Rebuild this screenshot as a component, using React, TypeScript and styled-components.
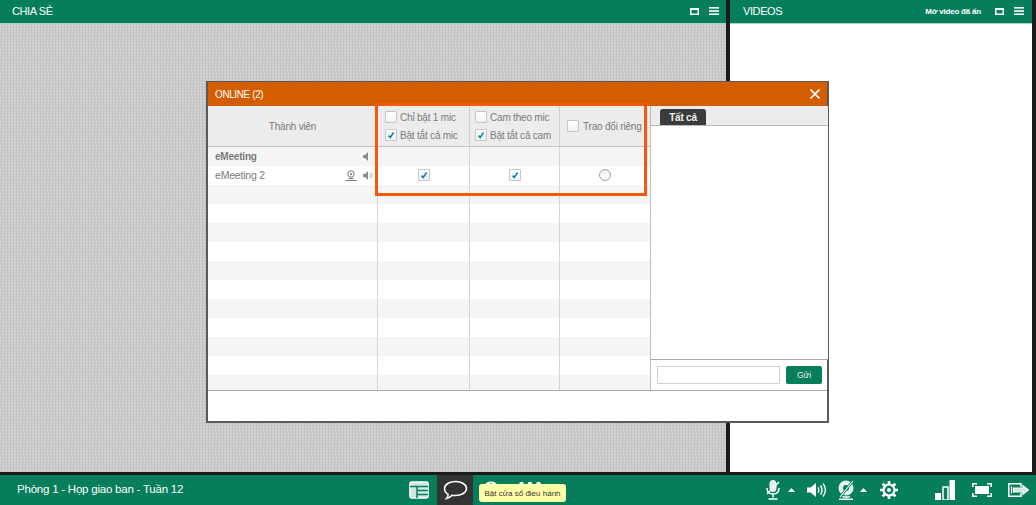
import styled, { createGlobalStyle } from "styled-components";

const GlobalStyle = createGlobalStyle`
  html, body {
    margin: 0;
    padding: 0;
    background: #1a1a1a;
  }
  * {
    box-sizing: border-box;
  }
`;

const GREEN = "#067d5b";
const TEXT = "#7a7a7a";
const COLUMNS = "169px 92px 90px 91px";

const Page = styled.div`
  position: relative;
  width: 1036px;
  height: 505px;
  display: flex;
  flex-direction: column;
  overflow: hidden;
  font-family: "Liberation Sans", Arial, sans-serif;
  background: #1a1a1a;
`;

const Main = styled.div`
  height: 472px;
  display: flex;
  gap: 4px;
  padding-right: 4px;
`;

const Panel = styled.section<{ $width: number }>`
  width: ${(props) => props.$width}px;
  display: flex;
  flex-direction: column;
`;

const PanelHeader = styled.header<{ $left: number; $right: number }>`
  height: 24px;
  flex: none;
  display: flex;
  align-items: center;
  padding: 0 ${(props) => props.$right}px 1px ${(props) => props.$left}px;
  background: ${GREEN};
  border-bottom: 1px solid #9fd8c4;
  color: #fff;
`;

const PanelTitle = styled.h2`
  margin: 0;
  flex: 1;
  font-size: 11px;
  font-weight: 400;
  letter-spacing: -0.4px;
`;

const HiddenLink = styled.span`
  font-size: 8px;
  font-weight: 700;
  margin-right: 14px;
  letter-spacing: -0.2px;
`;

const HeaderIcons = styled.div`
  display: flex;
  align-items: center;
  gap: 10px;
  svg {
    display: block;
  }
`;

const ShareBody = styled.div`
  flex: 1;
  background-color: #cbcbcb;
  background-image: repeating-conic-gradient(#c2c2c2 0 25%, #d4d4d4 0 50%);
  background-size: 3px 3px;
`;

const VideoBody = styled.div`
  flex: 1;
  background: #fff;
`;

const BottomBar = styled.footer`
  margin-top: 3px;
  height: 30px;
  display: flex;
  align-items: stretch;
  background: ${GREEN};
  color: #fff;
`;

const RoomName = styled.div`
  width: 400px;
  padding: 0 0 3px 17px;
  display: flex;
  align-items: center;
  font-size: 11.5px;
  letter-spacing: -0.22px;
`;

const BarCell = styled.div<{ $width: number; $active?: boolean; $gap?: number }>`
  width: ${(props) => props.$width}px;
  display: flex;
  align-items: center;
  justify-content: center;
  gap: ${(props) => props.$gap ?? 0}px;
  background: ${(props) => (props.$active ? "#333" : "transparent")};
`;

const BarSpacer = styled.div<{ $width?: number }>`
  flex: ${(props) => (props.$width ? `0 0 ${props.$width}px` : "1")};
`;

const Tooltip = styled.div`
  position: absolute;
  left: 479px;
  top: 484px;
  width: 87px;
  height: 18px;
  display: flex;
  align-items: center;
  justify-content: center;
  background: #ffffa8;
  border-radius: 3px;
  color: #333;
  font-size: 8px;
  white-space: nowrap;
`;

const Modal = styled.div`
  position: absolute;
  left: 206px;
  top: 81px;
  width: 623px;
  height: 342px;
  display: flex;
  flex-direction: column;
  background: #fff;
  border: 1px solid #5a5a5a;
  border-right-width: 2px;
  border-bottom-width: 2px;
  border-left-width: 2px;
`;

const ModalTitle = styled.div`
  height: 24px;
  flex: none;
  display: flex;
  align-items: center;
  justify-content: space-between;
  padding: 0 7px 0 7px;
  background: #d45d00;
  color: #fff;
  font-size: 10px;
  letter-spacing: -0.4px;
`;

const ModalBody = styled.div`
  height: 285px;
  flex: none;
  display: flex;
  border-bottom: 1px solid #a8a8a8;
`;

const Members = styled.div`
  width: 443px;
  flex: none;
  overflow: hidden;
  border-right: 1px solid #bdbdbd;
`;

const TableHead = styled.div`
  height: 41px;
  display: grid;
  grid-template-columns: ${COLUMNS};
  background: #ececec;
  border-bottom: 1px solid #c4c4c4;
`;

const HeadCell = styled.div<{ $center?: boolean; $pad?: number }>`
  display: flex;
  flex-direction: column;
  justify-content: center;
  align-items: ${(props) => (props.$center ? "center" : "flex-start")};
  gap: 5px;
  padding-left: ${(props) => props.$pad ?? 0}px;
  color: ${TEXT};
  font-size: 10px;
  letter-spacing: -0.2px;
  border-left: 1px solid #cfcfcf;
  &:first-child {
    border-left: none;
  }
`;

const CheckLabel = styled.label<{ $gap?: number }>`
  height: 13px;
  display: flex;
  align-items: center;
  gap: ${(props) => props.$gap ?? 3}px;
  white-space: nowrap;
`;

const Row = styled.div<{ $shaded: boolean }>`
  height: 19px;
  display: grid;
  grid-template-columns: ${COLUMNS};
  background: ${(props) => (props.$shaded ? "#f5f5f5" : "#fff")};
`;

const NameCell = styled.div<{ $bold?: boolean }>`
  display: flex;
  align-items: center;
  gap: 6px;
  padding: 0 4px 1px 7px;
  color: ${TEXT};
  font-size: ${(props) => (props.$bold ? 10 : 10.5)}px;
  font-weight: ${(props) => (props.$bold ? 700 : 400)};
  letter-spacing: -0.2px;
`;

const Name = styled.span`
  flex: 1;
`;

const ToggleCell = styled.div`
  display: flex;
  align-items: center;
  justify-content: center;
  padding-bottom: 1px;
  border-left: 1px solid #d6d6d6;
`;

const Box = styled.span`
  width: 12px;
  height: 12px;
  flex: none;
  display: flex;
  align-items: center;
  justify-content: center;
  background: linear-gradient(#fff, #f2f2f2);
  border: 1px solid #c6c6c6;
  border-radius: 1px;
`;

const Radio = styled.span`
  width: 12px;
  height: 12px;
  border-radius: 50%;
  border: 1px solid #a0a0a0;
  background: linear-gradient(#f0f0f0, #fff);
`;

const Chat = styled.div`
  flex: 1;
  display: flex;
  flex-direction: column;
`;

const TabBar = styled.div`
  height: 20px;
  flex: none;
  display: flex;
  align-items: flex-end;
  padding-left: 9px;
  background: #ececec;
  border-bottom: 1px solid #b8b8b8;
`;

const Tab = styled.div`
  width: 46px;
  height: 16px;
  display: flex;
  align-items: center;
  justify-content: center;
  background: #3b3b3b;
  border-radius: 3px 3px 0 0;
  color: #f0f0f0;
  font-size: 10px;
  font-weight: 700;
  letter-spacing: -0.2px;
`;

const Messages = styled.div`
  flex: 1;
  background: #fff;
`;

const Composer = styled.div`
  height: 31px;
  flex: none;
  display: flex;
  align-items: center;
  gap: 6px;
  padding: 0 6px;
  border-top: 1px solid #a8a8a8;
`;

const ChatInput = styled.input`
  width: 123px;
  height: 18px;
  padding: 0 4px;
  background: #fff;
  border: 1px solid #cfcfcf;
  outline: none;
`;

const SendButton = styled.button`
  width: 36px;
  height: 18px;
  padding: 0;
  background: ${GREEN};
  border: none;
  border-radius: 2px;
  color: #f2f2f2;
  font-family: inherit;
  font-size: 8.5px;
  font-weight: 400;
`;

const ModalFooter = styled.div`
  flex: 1;
  background: #fff;
`;

const Highlight = styled.div`
  position: absolute;
  left: 375px;
  top: 103px;
  width: 272px;
  height: 93px;
  border: 3px solid #f4590b;
  pointer-events: none;
`;

const WindowIcon = () => (
  <svg width="9" height="7" viewBox="0 0 9 7">
    <rect x="0.75" y="0.75" width="7.5" height="5.5" fill="#067d5b" stroke="#fff" strokeWidth="1.5" />
    <rect x="1" y="1" width="7" height="1" fill="#fff" />
  </svg>
);

const MenuIcon = () => (
  <svg width="10" height="8" viewBox="0 0 10 8" fill="#fff">
    <rect y="0" width="10" height="1.6" />
    <rect y="3.2" width="10" height="1.6" />
    <rect y="6.4" width="10" height="1.6" />
  </svg>
);

const CloseIcon = () => (
  <svg width="10" height="10" viewBox="0 0 10 10" stroke="#fff" strokeWidth="1.6">
    <path d="M0.5 0.5 9.5 9.5M9.5 0.5 0.5 9.5" />
  </svg>
);

const Tick = () => (
  <svg width="8" height="8" viewBox="0 0 8 8" fill="none" stroke="#0b86a3" strokeWidth="1.6">
    <path d="M1.5 4.6 3.2 6.4 6.6 1.5" />
  </svg>
);

const SpeakerSmall = ({ waves }: { waves?: boolean }) => (
  <svg width="10" height="9" viewBox="0 0 10 9" fill="#8c8c8c">
    <path d="M0 3h2l3-3v9L2 6H0z" />
    {waves && <path d="M6.5 2.5c1 1.2 1 2.800 0 4M8 1.500c1.600 1.800 1.600 4.200 0 6" fill="none" stroke="#b5b5b5" />}
  </svg>
);

const CamSmall = () => (
  <svg width="12" height="11" viewBox="0 0 12 11" fill="none" stroke="#777">
    <circle cx="6" cy="4" r="3.200" />
    <circle cx="6" cy="4" r="1" fill="#777" stroke="none" />
    <path d="M0.500 10.500h11M3.500 8.500h5" />
  </svg>
);

const LayoutIcon = () => (
  <svg width="20" height="18" viewBox="0 0 20 18">
    <rect x="1" y="1" width="18" height="16" rx="2" fill="#cfe8df" stroke="#fff" strokeWidth="1.600" />
    <path d="M1 5.500h18M8 5.500V17M8 9.500h11M8 13.500h11" stroke={GREEN} strokeWidth="1.500" />
  </svg>
);

const BubbleIcon = () => (
  <svg width="25" height="20" viewBox="0 0 25 20" fill="none" stroke="#fff" strokeWidth="1.500">
    <path d="M12.500 1.500c6 0 11 3 11 7s-5 7-11 7c-1.200 0-2.300-.1-3.400-.3-1.200 1.400-3 2.600-5.600 3.300 1-1.200 1.600-2.600 1.700-4.200C2.800 13 1.500 10.900 1.500 8.500c0-4 5-7 11-7z" />
  </svg>
);

const ConsoleIcon = () => (
  <svg width="20" height="20" viewBox="0 0 20 20">
    <circle cx="10" cy="10" r="8.500" fill="#f2f7f4" />
    <path d="M6 7l4-3 3 3" fill="none" stroke="#067d5b" strokeWidth="1.500" />
  </svg>
);

const PeopleIcon = () => (
  <svg width="24" height="20" viewBox="0 0 24 20" fill="#fff">
    <circle cx="3.500" cy="4" r="2.300" />
    <circle cx="12" cy="4" r="2.300" />
    <circle cx="20.500" cy="4" r="2.300" />
    <rect x="1.500" y="7" width="4" height="9" />
    <rect x="10" y="7" width="4" height="9" />
    <rect x="18.500" y="7" width="4" height="9" />
  </svg>
);

const Caret = () => (
  <svg width="7" height="4" viewBox="0 0 7 4" fill="#fff">
    <path d="M0 4 3.500 0 7 4z" />
  </svg>
);

const MicIcon = () => (
  <svg width="16" height="20" viewBox="0 0 16 20" fill="none" stroke="#fff">
    <rect x="5" y="0.500" width="6" height="11" rx="3" fill="#dff0e9" strokeWidth="1" />
    <path d="M2 8c0 4 2.500 6 6 6s6-2 6-6M8 14v3.500M3.500 19h9" strokeWidth="1.500" />
    <path d="M2 14 14 2" strokeWidth="1.500" />
  </svg>
);

const VolumeIcon = () => (
  <svg width="20" height="16" viewBox="0 0 20 16" fill="none" stroke="#fff" strokeWidth="1.400">
    <path d="M0 5.500h3.500L9 1v14l-5.500-4.500H0z" fill="#fff" stroke="none" />
    <path d="M11 5.500c1 1.500 1 3.500 0 5M13.500 3.500c2 2.800 2 6.200 0 9M16 1.500c3 4 3 9 0 13" />
  </svg>
);

const WebcamIcon = () => (
  <svg width="18" height="20" viewBox="0 0 18 20" fill="none" stroke="#fff">
    <circle cx="9" cy="8" r="7.500" fill="#e6f2ed" stroke="none" />
    <circle cx="9" cy="8" r="3" fill={GREEN} stroke="none" />
    <path d="M5 16.500c1 .8 7 .8 8 0M2 19.200h14" strokeWidth="1.600" />
    <path d="M3 17 16 1" stroke={GREEN} strokeWidth="2.600" />
    <path d="M3 17 16 1" strokeWidth="1.100" />
  </svg>
);

const GearIcon = () => (
  <svg width="20" height="20" viewBox="0 0 20 20" fill="none" stroke="#fff">
    <circle cx="10" cy="10" r="5.500" strokeWidth="2.200" />
    <circle cx="10" cy="10" r="2" fill="#fff" stroke="none" />
    <path
      d="M10 1v3.500M10 15.500V19M1 10h3.500M15.500 10H19M3.600 3.600l2.500 2.500M13.900 13.900l2.500 2.500M16.400 3.600l-2.500 2.500M6.100 13.900l-2.500 2.500"
      strokeWidth="2.600"
    />
  </svg>
);

const SignalIcon = () => (
  <svg width="20" height="20" viewBox="0 0 20 20">
    <rect x="0" y="13" width="6" height="7" fill="#fff" />
    <rect x="8" y="7" width="5" height="13" fill={GREEN} stroke="#fff" strokeWidth="1.500" />
    <rect x="14.500" y="0" width="5.500" height="20" fill="#fff" />
  </svg>
);

const FullscreenIcon = () => (
  <svg width="20" height="14" viewBox="0 0 20 14" fill="none" stroke="#fff" strokeWidth="1.500">
    <path d="M.8 4V.8H5M15 .8h4.200V4M.8 10v3.200H5M15 13.200h4.200V10" />
    <rect x="3" y="3" width="14" height="8" fill="#fff" stroke="none" />
  </svg>
);

const ExitIcon = () => (
  <svg width="21" height="14" viewBox="0 0 21 14" fill="none" stroke="#fff" strokeWidth="1.500">
    <path d="M13 4V.8H.8v12.400H13V10" />
    <path d="M3.500 3.500v7" strokeWidth="1.200" />
    <path d="M5.500 5.200h9.500V2.800L20.500 7 15 11.200V8.800H5.500z" fill="#cfe8df" strokeWidth="1.200" />
  </svg>
);

const Checkbox = ({ checked }: { checked?: boolean }) => <Box>{checked && <Tick />}</Box>;

const ROWS = Array.from({ length: 13 }, (_, i) => i);

export default function App() {
  return (
    <Page>
      <GlobalStyle />
      <Main>
        <Panel $width={726}>
          <PanelHeader $left={12} $right={7}>
            <PanelTitle>CHIA SẺ</PanelTitle>
            <HeaderIcons>
              <WindowIcon />
              <MenuIcon />
            </HeaderIcons>
          </PanelHeader>
          <ShareBody />
        </Panel>
        <Panel $width={302}>
          <PanelHeader $left={13} $right={8}>
            <PanelTitle>VIDEOS</PanelTitle>
            <HiddenLink>Mở video đã ẩn</HiddenLink>
            <HeaderIcons>
              <WindowIcon />
              <MenuIcon />
            </HeaderIcons>
          </PanelHeader>
          <VideoBody />
        </Panel>
      </Main>

      <BottomBar>
        <RoomName>Phòng 1 - Họp giao ban - Tuần 12</RoomName>
        <BarCell $width={37}>
          <LayoutIcon />
        </BarCell>
        <BarCell $width={36} $active>
          <BubbleIcon />
        </BarCell>
        <BarCell $width={36}>
          <ConsoleIcon />
        </BarCell>
        <BarCell $width={42}>
          <PeopleIcon />
        </BarCell>
        <BarSpacer />
        <BarCell $width={37} $gap={7}>
          <MicIcon />
          <Caret />
        </BarCell>
        <BarCell $width={37}>
          <VolumeIcon />
        </BarCell>
        <BarCell $width={34} $gap={5}>
          <WebcamIcon />
          <Caret />
        </BarCell>
        <BarSpacer $width={2} />
        <BarCell $width={36}>
          <GearIcon />
        </BarCell>
        <BarSpacer $width={20} />
        <BarCell $width={36}>
          <SignalIcon />
        </BarCell>
        <BarCell $width={37}>
          <FullscreenIcon />
        </BarCell>
        <BarCell $width={36}>
          <ExitIcon />
        </BarCell>
      </BottomBar>

      <Tooltip>Bật cửa sổ điều hành</Tooltip>

      <Modal>
        <ModalTitle>
          <span>ONLINE (2)</span>
          <CloseIcon />
        </ModalTitle>
        <ModalBody>
          <Members>
            <TableHead>
              <HeadCell $center>Thành viên</HeadCell>
              <HeadCell $pad={7}>
                <CheckLabel>
                  <Checkbox />
                  Chỉ bật 1 mic
                </CheckLabel>
                <CheckLabel>
                  <Checkbox checked />
                  Bật tắt cả mic
                </CheckLabel>
              </HeadCell>
              <HeadCell $pad={5}>
                <CheckLabel>
                  <Checkbox />
                  Cam theo mic
                </CheckLabel>
                <CheckLabel>
                  <Checkbox checked />
                  Bật tắt cả cam
                </CheckLabel>
              </HeadCell>
              <HeadCell $pad={7}>
                <CheckLabel $gap={4}>
                  <Checkbox />
                  Trao đổi riêng
                </CheckLabel>
              </HeadCell>
            </TableHead>
            {ROWS.map((i) => (
              <Row key={i} $shaded={i % 2 === 0}>
                <NameCell $bold={i === 0}>
                  {i === 0 && (
                    <>
                      <Name>eMeeting</Name>
                      <SpeakerSmall />
                    </>
                  )}
                  {i === 1 && (
                    <>
                      <Name>eMeeting 2</Name>
                      <CamSmall />
                      <SpeakerSmall waves />
                    </>
                  )}
                </NameCell>
                <ToggleCell>{i === 1 && <Checkbox checked />}</ToggleCell>
                <ToggleCell>{i === 1 && <Checkbox checked />}</ToggleCell>
                <ToggleCell>{i === 1 && <Radio />}</ToggleCell>
              </Row>
            ))}
          </Members>
          <Chat>
            <TabBar>
              <Tab>Tất cả</Tab>
            </TabBar>
            <Messages />
            <Composer>
              <ChatInput />
              <SendButton>Gửi</SendButton>
            </Composer>
          </Chat>
        </ModalBody>
        <ModalFooter />
      </Modal>

      <Highlight />
    </Page>
  );
}
